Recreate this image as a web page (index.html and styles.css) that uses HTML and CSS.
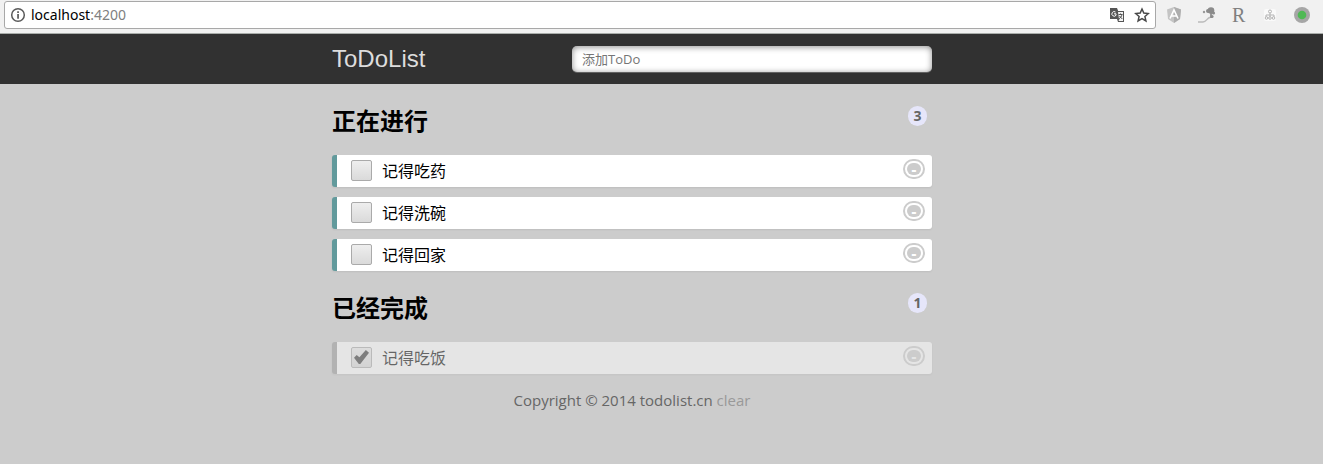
FILE: index.html
```html
<!DOCTYPE html>
<html lang="zh-CN">
<head>
<meta charset="utf-8">
<title>ToDoList</title>
<link rel="stylesheet" href="styles.css">
</head>
<body>
<div class="toolbar">
  <div class="address">
    <svg class="info" width="16" height="16" viewBox="0 0 16 16" aria-hidden="true"><circle cx="8" cy="8" r="6.3" fill="none" stroke="#5a5a5a" stroke-width="1.5"/><path d="M7.2 4.3h1.7v1.6H7.2zM7.2 7h1.7v4.8H7.2z" fill="#5a5a5a"/></svg>
    <span class="url">localhost<span class="port">:4200</span></span>
    <svg width="16" height="16" viewBox="0 0 16 16" aria-hidden="true"><path d="M1 1h7l1.200 3H15v11H9l-1-3H1z" fill="#555"/><path d="M9 5h5v9H9.500l1-2H10z" fill="#f4f4f4"/><path d="M6.500 5A2.300 2.300 0 1 0 7 8.300V6.800H5" fill="none" stroke="#fff" stroke-width="1"/><path d="M9.500 7.500h4M11.500 6.500v1M13 7.500c-.4 2-1.500 3.300-3 4.200M10.500 9l2.800 3" fill="none" stroke="#555" stroke-width="1"/></svg>
    <svg width="16" height="16" viewBox="0 0 16 16" aria-hidden="true"><path d="M8 2l1.800 4.100 4.500.4-3.400 3 1 4.400L8 11.600l-3.900 2.300 1-4.400-3.400-3 4.500-.4z" fill="none" stroke="#484848" stroke-width="1.500"/></svg>
  </div>
  <div class="extensions">
    <svg width="16" height="16" viewBox="0 0 16 16" aria-hidden="true"><path d="M8 0l7 2.500-1 9.500-6 4-6-4-1-9.500z" fill="#c4c4c4"/><path d="M8 0l7 2.500-1 9.500-6 4z" fill="#adadad"/><path d="M4 11.500L8 3l4 8.500M5.700 9h4.600" fill="none" stroke="#fff" stroke-width="1.600"/></svg>
    <svg width="18" height="16" viewBox="0 0 18 16" aria-hidden="true"><path d="M0 15h5c4 0 3-4 8-5" fill="none" stroke="#bbb" stroke-width="1.300"/><path d="M13 5v6" stroke="#999" stroke-width="2"/><circle cx="13" cy="3.500" r="3.300" fill="#8b8b8b"/><circle cx="10" cy="4" r="2" fill="#8b8b8b"/><circle cx="15.500" cy="6" r="1.600" fill="#8b8b8b"/><circle cx="14" cy="9.500" r="1.600" fill="#8b8b8b"/><circle cx="6" cy="5" r="1.200" fill="#999"/></svg>
    <span class="letter">R</span>
    <svg width="16" height="16" viewBox="0 0 16 16" aria-hidden="true"><rect x="2" y="2" width="12" height="12" rx="2" fill="#fafafa"/><path d="M8 5v5M4 10V8h8v2" fill="none" stroke="#b4b4b4"/><g fill="#fafafa" stroke="#b4b4b4"><circle cx="8" cy="4.500" r="1.500"/><circle cx="4.500" cy="11" r="1.300"/><circle cx="8" cy="11" r="1.300"/><circle cx="11.500" cy="11" r="1.300"/></g></svg>
    <svg width="16" height="16" viewBox="0 0 16 16" aria-hidden="true"><circle cx="8" cy="8" r="8" fill="#a6a6a6"/><circle cx="8" cy="8" r="4.300" fill="#50b955"/></svg>
  </div>
</div>
<header class="header">
  <form class="container bar">
    <label class="brand" for="title">ToDoList</label>
    <input class="new-todo" id="title" type="text" placeholder="添加ToDo">
  </form>
</header>
<main class="container">
  <section>
    <div class="heading"><h2>正在进行</h2><span class="count">3</span></div>
    <ul class="list">
      <li class="item"><label><input type="checkbox">记得吃药</label><button class="remove" type="button" aria-label="删除">-</button></li>
      <li class="item"><label><input type="checkbox">记得洗碗</label><button class="remove" type="button" aria-label="删除">-</button></li>
      <li class="item"><label><input type="checkbox">记得回家</label><button class="remove" type="button" aria-label="删除">-</button></li>
    </ul>
  </section>
  <section>
    <div class="heading"><h2>已经完成</h2><span class="count">1</span></div>
    <ul class="list">
      <li class="item done"><label><input type="checkbox" checked>记得吃饭</label><button class="remove" type="button" aria-label="删除">-</button></li>
    </ul>
  </section>
</main>
<footer class="footer">Copyright © 2014 todolist.cn <a href="#">clear</a></footer>
</body>
</html>
```

FILE: styles.css
```css
* {
  box-sizing: border-box;
}

body {
  margin: 0;
  background: #ccc;
  color: #000;
  font: 16px/24px "Noto Sans", "Noto Sans CJK SC", sans-serif;
}

.toolbar {
  display: flex;
  align-items: center;
  height: 34px;
  padding: 0 13px 4px 4px;
  border-bottom: 1px solid #a9adaa;
  background: #f1f1f1;
}

.address {
  display: flex;
  flex: 1;
  align-items: center;
  gap: 9px;
  height: 28px;
  margin-top: 1px;
  padding: 0 5px;
  border: 1px solid #a8a8a8;
  border-radius: 3px;
  background: #fff;
}

.info {
  margin-right: -4px;
}

.url {
  flex: 1;
  font-size: 14px;
}

.port {
  color: #808080;
}

.extensions {
  display: flex;
  align-items: center;
  gap: 16px;
  margin-left: 10px;
}

.letter {
  width: 14px;
  color: #808080;
  font: 20px/16px "Liberation Serif", serif;
}

.header,
main,
.footer {
  padding-right: 59px;
}

.header {
  background: #313131;
}

.container {
  max-width: 600px;
  margin: 0 auto;
}

main.container {
  max-width: 659px;
}

.bar {
  display: flex;
  align-items: center;
  justify-content: space-between;
  height: 50px;
}

.brand {
  color: #ddd;
  font: 24px/50px "Liberation Sans", sans-serif;
}

.new-todo {
  width: 60%;
  height: 26px;
  padding: 0 10px;
  border: 0;
  border-radius: 5px;
  background: #fff;
  box-shadow: 0 1px 0 rgba(255, 255, 255, 0.24), 0 1px 6px rgba(0, 0, 0, 0.45) inset;
  font: 13px/26px "Open Sans", "Noto Sans CJK SC", sans-serif;
}

.new-todo::placeholder {
  color: #757575;
}

.heading {
  display: flex;
  align-items: flex-start;
  justify-content: space-between;
  padding: 21px 5px 18px 0;
}

h2 {
  margin: 0;
  font-size: 24px;
  line-height: 32px;
}

.count {
  min-width: 19px;
  margin-top: 1px;
  padding: 0 5px;
  border-radius: 10px;
  background: #e6e6fa;
  color: #666;
  font-size: 14px;
  font-weight: bold;
  line-height: 20px;
  text-align: center;
}

.list {
  display: grid;
  gap: 10px;
  margin: 0;
  padding: 0;
  list-style: none;
}

.item {
  display: flex;
  align-items: flex-start;
  height: 32px;
  padding-right: 7px;
  border-left: 5px solid #629a9c;
  border-radius: 3px;
  background: #fff;
  box-shadow: 0 1px 2px rgba(0, 0, 0, 0.07);
}

.item label {
  display: flex;
  flex: 1;
  align-items: center;
  gap: 10px;
  height: 32px;
  padding-left: 14px;
}

.item input {
  display: grid;
  place-items: center;
  width: 21px;
  height: 21px;
  margin: 0 0 2px;
  border: 1px solid #aaa;
  border-radius: 2px;
  background: linear-gradient(#eee, #dadada);
  appearance: none;
}

.item input:checked::before {
  width: 15px;
  height: 14px;
  background: #333;
  clip-path: polygon(0 55%, 18% 36%, 36% 52%, 79% 0, 100% 20%, 42% 100%, 32% 100%);
  content: "";
}

.remove {
  width: 22px;
  height: 20px;
  margin-top: 4px;
  padding: 2px;
  border: 2px solid #ccc;
  border-radius: 10px;
  background: #ccc content-box;
  color: #fff;
  font: bold 16px/14px "Liberation Sans", sans-serif;
}

.done {
  border-left-color: #999;
  opacity: 0.5;
}

.footer {
  padding-top: 14px;
  color: #666;
  font-family: "Open Sans", sans-serif;
  font-size: 15px;
  text-align: center;
}

.footer a {
  color: #999;
  text-decoration: none;
}
```
